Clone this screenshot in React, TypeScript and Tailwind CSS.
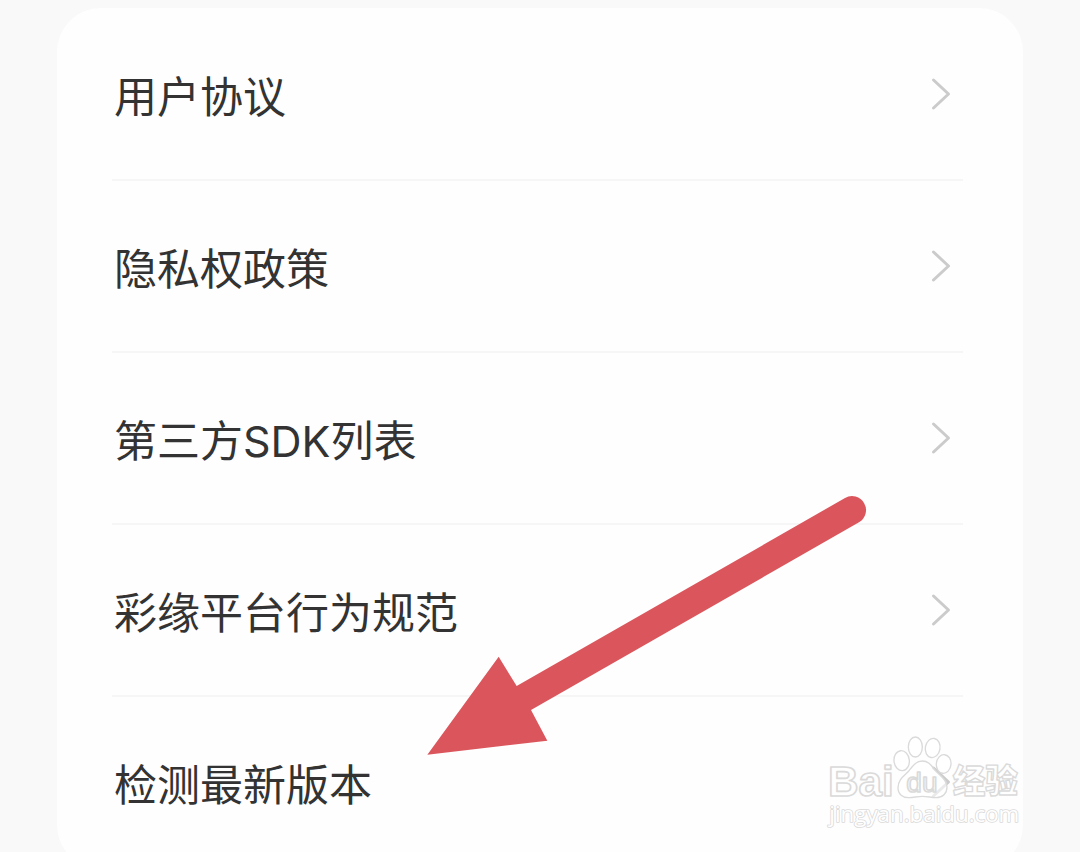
const items = [
  { label: "用户协议", href: "#agreement" },
  { label: "隐私权政策", href: "#privacy" },
  { label: "第三方SDK列表", href: "#sdk" },
  { label: "彩缘平台行为规范", href: "#conduct" },
  { label: "检测最新版本", href: "#version" },
];

function Chevron() {
  return (
    <svg
      aria-hidden="true"
      className="h-9 w-6 shrink-0"
      viewBox="0 0 24 36"
      fill="none"
      stroke="#cbcbcb"
      strokeWidth="3"
      strokeLinecap="round"
      strokeLinejoin="round"
    >
      <path d="M3.5 4 L18.5 18 L3.5 32" />
    </svg>
  );
}

function Arrow() {
  return (
    <svg
      aria-hidden="true"
      className="pointer-events-none absolute top-[480px] left-[410px] h-[290px] w-[480px]"
      viewBox="0 0 1440 870"
      fill="#db565c"
    >
      <path d="M52 824 L266 530 L320 618 L1305 54 A42 42 0 0 1 1347 127 L363 690 L412 782 Z" />
    </svg>
  );
}

function Watermark() {
  return (
    <svg
      role="img"
      aria-label="Baidu 经验"
      className="pointer-events-none absolute right-[40px] bottom-0 h-[132px] w-[230px]"
      viewBox="0 0 690 396"
      fill="#ffffff"
      stroke="#dadada"
      strokeWidth="4"
      strokeLinejoin="round"
    >
      <ellipse cx="275" cy="122" rx="23" ry="30" transform="rotate(-6 275 122)" />
      <ellipse cx="316" cy="81" rx="21" ry="30" />
      <ellipse cx="368" cy="84" rx="22" ry="29" transform="rotate(10 368 84)" />
      <ellipse cx="401" cy="132" rx="22" ry="28" transform="rotate(6 401 132)" />
      <path
        fillOpacity="0.6"
        d="M337 123 C318 123 308 138 298 151 C286 166 264 176 264 203 C264 222 278 234 298 233 C313 232 324 229 337 229 C351 229 362 232 378 233 C398 233 411 220 411 201 C411 177 388 166 376 151 C365 138 356 123 337 123 Z"
      />
      <text x="54" y="229" fontSize="127" fontWeight="700" fontFamily="Liberation Sans, sans-serif" strokeWidth="5">
        Bai
      </text>
      <text x="289" y="216" fontSize="84" fontFamily="Liberation Sans, sans-serif" strokeWidth="5">
        du
      </text>
      <text x="428" y="220" fontSize="98" fontWeight="900" fontFamily="Noto Sans CJK SC, sans-serif">
        经验
      </text>
      <text x="58" y="306" fontSize="67" fontFamily="Open Sans, sans-serif" strokeWidth="5" style={{ paintOrder: "stroke" }}>
        jingyan.baidu.com
      </text>
    </svg>
  );
}

export default function App() {
  return (
    <main className="relative h-screen overflow-hidden bg-[#f9f9f9] px-[57px] pt-2 font-['Inter','Noto_Sans_CJK_SC',sans-serif]">
      <nav className="rounded-[44px] bg-[#fefefe] pt-px pr-[60px] pl-[55px]">
        <ul>
          {items.map((item) => (
            <li key={item.label} className="border-b-2 border-[#f6f6f6] last:border-transparent">
              <a
                href={item.href}
                className="flex h-[170px] items-center justify-between pr-[9px] pl-[2px] text-[43px] leading-[60px] text-[#333333]"
              >
                <span className="pt-1.5">{item.label}</span>
                <Chevron />
              </a>
            </li>
          ))}
        </ul>
      </nav>
      <Arrow />
      <Watermark />
    </main>
  );
}
